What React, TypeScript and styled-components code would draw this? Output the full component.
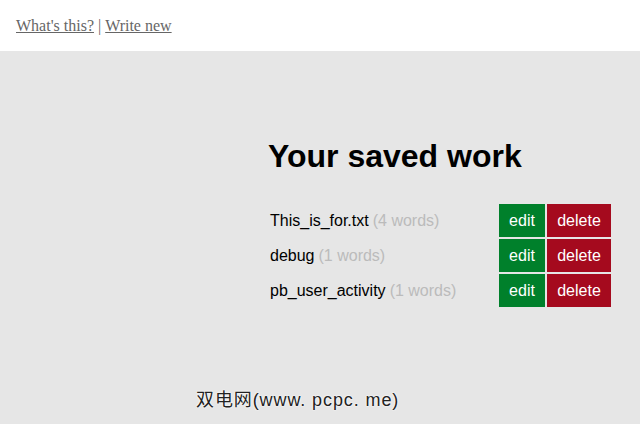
import styled, { createGlobalStyle } from 'styled-components';

const GlobalStyle = createGlobalStyle`
	html, body {
		margin: 0;
		padding: 0;
		background: #e6e6e6;
	}
`;

const files = [
	{ name: 'This_is_for.txt', words: 4 },
	{ name: 'debug', words: 1 },
	{ name: 'pb_user_activity', words: 1 },
];

const App = () => {
	return (
		<Page>
			<GlobalStyle />
			<TopBar>
				<NavLink href="#">What's this?</NavLink>
				<Divider>|</Divider>
				<NavLink href="#">Write new</NavLink>
			</TopBar>
			<Main>
				<Content>
					<Title>Your saved work</Title>
					<FileList>
						{files.map((file) => (
							<FileRow key={file.name}>
								<FileName>
									{file.name} <WordCount>({file.words} words)</WordCount>
								</FileName>
								<ActionBtn $danger={false}>edit</ActionBtn>
								<ActionBtn $danger={true}>delete</ActionBtn>
							</FileRow>
						))}
					</FileList>
				</Content>
				<Watermark>双电网(www. pcpc. me)</Watermark>
			</Main>
		</Page>
	);
};
export default App;

const Page = styled.div`
	width: 640px;
	height: 424px;
	display: flex;
	flex-direction: column;
	overflow: hidden;
`;

const TopBar = styled.div`
	height: 51px;
	background-color: #ffffff;
	box-sizing: border-box;
	padding: 17px 0 0 16px;
	font-family: 'Liberation Serif', serif;
	font-size: 16px;
	color: #666666;
`;

const NavLink = styled.a`
	color: #666666;
	text-decoration: underline;
`;

const Divider = styled.span`
	margin: 0 4px;
`;

const Main = styled.div`
	flex: 1;
	position: relative;
	background-color: #e6e6e6;
`;

const Content = styled.div`
	margin-left: 268px;
	padding-top: 86px;
	width: 343px;
`;

const Title = styled.h1`
	margin: 0 0 29px 0;
	font-family: 'Liberation Sans', Arial, sans-serif;
	font-size: 32px;
	font-weight: 700;
	line-height: 38px;
	color: #000000;
`;

const FileList = styled.div`
	display: flex;
	flex-direction: column;
	gap: 2px;
`;

const FileRow = styled.div`
	display: flex;
	align-items: stretch;
	gap: 2px;
	height: 33px;
`;

const FileName = styled.div`
	flex: 1;
	display: flex;
	align-items: center;
	gap: 4px;
	padding-left: 2px;
	font-family: 'Liberation Sans', Arial, sans-serif;
	font-size: 16px;
	color: #000000;
	white-space: nowrap;
`;

const WordCount = styled.span`
	color: #bbbbbb;
`;

const ActionBtn = styled.button<{ $danger: boolean }>`
	border: none;
	margin: 0;
	padding: 0;
	width: ${(props) => (props.$danger ? '64px' : '46px')};
	background-color: ${(props) => (props.$danger ? '#a50a1e' : '#00802b')};
	color: #ffffff;
	font-family: 'Liberation Sans', Arial, sans-serif;
	font-size: 16px;
	cursor: pointer;
`;

const Watermark = styled.div`
	position: absolute;
	left: 196px;
	top: 334px;
	font-family: 'Liberation Sans', 'Noto Sans CJK SC', sans-serif;
	font-size: 18px;
	letter-spacing: 0.9px;
	color: #222222;
	text-shadow: 0 0 2px #ffffff, 0 0 2px #ffffff;
`;
